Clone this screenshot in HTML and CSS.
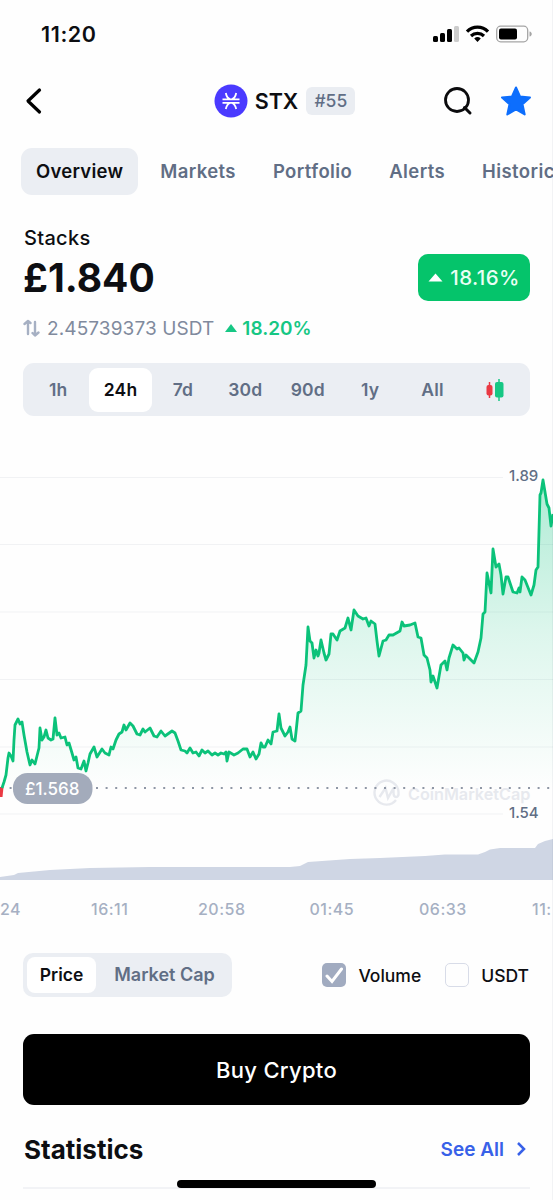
FILE: index.html
```html
<!DOCTYPE html>
<html lang="en">
<head>
    <meta charset="UTF-8">
    <meta name="viewport" content="width=device-width, initial-scale=1.0">
    <title>STX - Stacks</title>
    <link rel="stylesheet" href="styles.css">
</head>
<body>
    <div class="screen">
        <div class="status-bar">
            <span class="time">11:20</span>
            <svg class="status-icons" width="100" height="20" viewBox="0 0 100 20">
                <rect x="0" y="12" width="5" height="6" rx="1.5"/>
                <rect x="7" y="9" width="5" height="9" rx="1.5"/>
                <rect x="14" y="5" width="5" height="13" rx="1.5"/>
                <rect x="21" y="2" width="5" height="16" rx="1.5" fill="#ccc"/>
                <g fill="none" stroke="#000" stroke-width="3.2">
                    <path d="M34 7.6a14.5 14.5 0 0 1 21 0"/>
                    <path d="M38 12a9.5 9.5 0 0 1 13 0"/>
                </g>
                <path d="M41.2 14.5a5 5 0 0 1 6.6 0L44.5 18z"/>
                <rect x="63.7" y="2.2" width="31" height="15.6" rx="4" fill="none" stroke="#a5a5a5" stroke-width="1.3"/>
                <rect x="66" y="4.5" width="18" height="11" rx="2"/>
                <path d="M96.5 7.5c3 .5 3 4.5 0 5z" fill="#a5a5a5"/>
            </svg>
        </div>

        <div class="header">
            <svg class="back" width="18" height="28" viewBox="0 0 18 28"><path d="M15.500 3L4 14L15.500 25"/></svg>
            <div class="coin">
                <svg width="34" height="34" viewBox="0 0 34 34">
                    <circle cx="17" cy="17" r="16.5" fill="#4a3aff"/>
                    <path d="M8.500 15.400h17M8.500 18.800h17M11.800 9q1 5 4.200 6.200M22.200 9q-1 5-4.200 6.200M11.800 25q1-5 4.200-6.200M22.200 25q-1-5-4.200-6.200" fill="none" stroke="#fff" stroke-width="1.800"/>
                </svg>
                <span class="symbol">STX</span>
                <span class="rank">#55</span>
            </div>
            <div class="actions">
                <svg width="30" height="30" viewBox="0 0 30 30">
                    <circle cx="14" cy="14" r="11.5" fill="none" stroke="#0b0b0d" stroke-width="2.8"/>
                    <path d="M21.5 21.5l5.5 5.5" stroke="#0b0b0d" stroke-width="3" stroke-linecap="round"/>
                </svg>
                <svg width="32" height="32" viewBox="0 0 32 32">
                    <path d="M16 2.5L20 11.5L30 12.5L22.5 19.2L24.7 29.5L16 24.5L7.3 29.5L9.5 19.2L2 12.5L12 11.5Z" fill="#0d6efd" stroke="#0d6efd" stroke-width="2" stroke-linejoin="round"/>
                </svg>
            </div>
        </div>

        <div class="tabs">
            <span class="tab active">Overview</span>
            <span class="tab">Markets</span>
            <span class="tab">Portfolio</span>
            <span class="tab">Alerts</span>
            <span class="tab">Historical</span>
        </div>

        <div class="summary">
            <div>
                <div class="name">Stacks</div>
                <div class="price">£1.840</div>
            </div>
            <div class="change">
                <svg width="15" height="9" viewBox="0 0 15 9"><path d="M7.5 0.5L14.5 8.5H.5z" fill="#fff"/></svg>
                <span>18.16%</span>
            </div>
        </div>
        <div class="pair">
            <svg class="swap" width="17" height="20" viewBox="0 0 17 20"><path d="M5 16V3.500M1.500 6L5 3L7.500 5M12 4v13M9.500 15l2.500 2.500l3.500-3"/></svg>
            <span class="rate">2.45739373 USDT</span>
            <svg class="up" width="12" height="8" viewBox="0 0 12 8"><path d="M6 0l6 8H0z" fill="#16c784"/></svg>
            <span class="rate-change">18.20%</span>
        </div>

        <div class="ranges">
            <span>1h</span>
            <span class="active">24h</span>
            <span>7d</span>
            <span>30d</span>
            <span>90d</span>
            <span>1y</span>
            <span>All</span>
            <span class="candles">
                <svg width="20" height="22" viewBox="0 0 20 22">
                    <path d="M4.5 3v16" stroke="#ea3943" stroke-width="1.5"/>
                    <rect x="1.5" y="6" width="6" height="10.5" rx="2" fill="#ea3943"/>
                    <path d="M14 0v22" stroke="#16c784" stroke-width="1.5"/>
                    <rect x="10" y="3" width="8.5" height="15.5" rx="2" fill="#16c784"/>
                </svg>
            </span>
        </div>

        <svg class="chart" width="553" height="510" viewBox="0 416 553 510">
            <defs>
                <linearGradient id="fill" gradientUnits="userSpaceOnUse" x1="0" y1="480" x2="0" y2="790">
                    <stop offset="0" stop-color="#16c784" stop-opacity=".34"/>
                    <stop offset="0.5" stop-color="#16c784" stop-opacity=".14"/>
                    <stop offset="1" stop-color="#16c784" stop-opacity="0"/>
                </linearGradient>
            </defs>
            <path class="grid" d="M0 477.5H503M0 544.5H553M0 612H553M0 679.5H553M0 747H553M0 814H503"/>
            <path id="area" fill="url(#fill)"/>
            <path class="volume" d="M0 880V877L14 875L18 873L50 870L90 868L150 867H290L300 866L308 862L350 859L380 858L425 856L445 854.5H478L485 852L490 849.5L500 848H535L538 844L545 841L553 839V880Z"/>
            <g class="watermark">
                <path d="M396 800A12 12 0 1 1 398.500 792Q399 797 396 797Q393.500 797 393.500 792V788L388 798L385.500 788L379.500 797" fill="none" stroke-width="2.400"/>
                <text x="408" y="800">CoinMarketCap</text>
            </g>
            <path class="open-line" d="M0 788H553"/>
            <path d="M0 787H3.5L2.5 797H0Z" fill="#ea3943"/>
            <path id="line" class="line"/>
            <rect x="13" y="773" width="79.5" height="31" rx="14.5" fill="#a3abbb"/>
            <text class="open-price" x="25" y="795">£1.568</text>
            <text class="y-label" x="509" y="481">1.89</text>
            <text class="y-label" x="509" y="818">1.54</text>
            <g class="x-labels">
                <text x="0" y="915">24</text>
                <text x="91" y="915">16:11</text>
                <text x="198" y="915">20:58</text>
                <text x="309.5" y="915">01:45</text>
                <text x="419" y="915">06:33</text>
                <text x="532" y="915">11:</text>
            </g>
        </svg>

        <div class="options">
            <div class="toggle">
                <span class="active">Price</span>
                <span>Market Cap</span>
            </div>
            <div class="checks">
                <span class="box checked">
                    <svg width="19" height="18" viewBox="0 0 19 18"><path d="M2 10l5 5.5L16.5 3"/></svg>
                </span>
                <span class="label">Volume</span>
                <span class="box"></span>
                <span class="label">USDT</span>
            </div>
        </div>

        <button class="buy">Buy Crypto</button>

        <div class="stats">
            <h2>Statistics</h2>
            <a class="see-all">See All
                <svg width="12" height="16" viewBox="0 0 12 16"><path d="M3 2l6 6l-6 6"/></svg>
            </a>
        </div>
        <div class="home-bar"></div>
    </div>

    <script>
        const points = [
            [2,788],[4,782],[6,775],[8,758],[9,753],[11,756],[13,761],[14,740],[15,725],[18,719],[20,724],[22,722],[24,735],[27,752],[30,765],
            [32,760],[35,764],[37,756],[39,748],[40,728],[42,740],[44,737],[46,730],[48,738],[51,740],[53,739],[55,718],[57,735],[59,733],
            [61,738],[65,737],[67,745],[69,743],[72,753],[74,760],[76,757],[78,768],[81,769],[84,761],[86,771],[88,763],[90,754],[94,747],
            [97,757],[102,749],[105,753],[109,755],[111,747],[113,749],[116,740],[119,734],[122,732],[124,725],[126,730],[130,723],[133,726],
            [137,734],[140,735],[143,729],[145,732],[150,728],[154,736],[157,737],[161,731],[165,736],[172,731],[175,733],[178,741],[181,750],
            [185,751],[187,753],[190,748],[193,753],[196,752],[199,756],[202,750],[205,753],[208,751],[212,755],[215,753],[218,755],[221,753],
            [224,754],[226,752],[227,761],[229,752],[234,755],[238,753],[243,749],[247,749],[250,757],[253,752],[256,759],[259,754],[261,743],
            [263,747],[265,747],[268,740],[271,744],[273,732],[277,731],[279,714],[281,728],[285,736],[288,732],[290,727],[292,739],[295,741],
            [296,732],[298,713],[301,711],[303,685],[306,665],[308,627],[310,641],[312,643],[314,658],[316,650],[318,656],[319,653],[321,640],
            [324,653],[326,660],[329,654],[331,634],[333,634],[337,640],[340,631],[345,628],[348,618],[351,630],[354,610],[358,616],[363,619],
            [366,618],[369,626],[371,621],[375,624],[377,641],[379,656],[383,641],[386,640],[389,635],[393,635],[400,631],[402,622],[404,626],
            [410,625],[415,623],[418,637],[421,638],[424,655],[427,658],[430,670],[431,682],[433,676],[437,688],[441,665],[445,661],[447,670],
            [449,658],[453,645],[457,649],[459,648],[463,653],[464,660],[466,655],[474,663],[478,652],[481,638],[483,614],[485,612],[487,573],
            [491,593],[493,549],[496,567],[499,564],[501,575],[503,594],[506,577],[508,577],[513,592],[517,593],[519,588],[520,592],[522,577],
            [525,580],[531,595],[534,585],[536,570],[538,567],[540,495],[541,493],[543,480],[547,504],[549,508],[551,526],[553,514]
        ];
        const d = 'M' + points.map(p => p.join(' ')).join('L');
        document.getElementById('line').setAttribute('d', d);
        document.getElementById('area').setAttribute('d', d + 'V790H2Z');
    </script>
</body>
</html>
```
FILE: styles.css
```css
* {
    box-sizing: border-box;
}
body {
    margin: 0;
    font-family: Inter, sans-serif;
    background: #fefefe;
    color: #0d0e12;
}
.screen {
    position: relative;
    width: 553px;
    height: 1200px;
    overflow: hidden;
}
.screen::after {
    content: "";
    position: absolute;
    top: 0;
    right: 0;
    width: 1px;
    height: 100%;
    background: rgba(20, 30, 70, 0.05);
}
.status-bar {
    display: flex;
    justify-content: space-between;
    align-items: center;
    height: 68px;
    padding: 0 20px 0 41px;
}
.time {
    font-size: 21.5px;
    font-weight: 600;
    letter-spacing: 0.6px;
}
.header {
    display: flex;
    align-items: center;
    justify-content: space-between;
    height: 66px;
    padding: 0 21px 0 24px;
}
.back path {
    fill: none;
    stroke: #000;
    stroke-width: 3.2;
    stroke-linecap: round;
    stroke-linejoin: round;
}
.coin {
    display: flex;
    align-items: center;
    margin-left: 84px;
}
.symbol {
    margin: 0 8px 0 7px;
    font-size: 21.5px;
    font-weight: 600;
}
.rank {
    width: 49px;
    height: 28px;
    border-radius: 6px;
    background: #eaedf2;
    color: #616e85;
    font-size: 17.5px;
    font-weight: 500;
    line-height: 28px;
    text-align: center;
}
.actions {
    display: flex;
    align-items: center;
    gap: 27px;
}
.tabs {
    display: flex;
    height: 47px;
    margin: 14px 0 0 21px;
    white-space: nowrap;
}
.tab {
    height: 47px;
    margin-right: 7px;
    padding: 0 15px;
    border-radius: 11px;
    color: #616e85;
    font-size: 18.5px;
    font-weight: 600;
    letter-spacing: 0.4px;
    line-height: 47px;
}
.tab.active {
    background: #ebeef3;
    color: #0d0e12;
    letter-spacing: 0.25px;
}
.summary {
    display: flex;
    justify-content: space-between;
    align-items: flex-end;
    height: 106px;
    padding: 0 23px 0 24px;
}
.name {
    font-size: 20px;
    font-weight: 500;
    letter-spacing: 0.3px;
    line-height: 26px;
}
.price {
    height: 50px;
    margin-left: -1px;
    font-size: 39px;
    font-weight: 700;
    line-height: 54px;
}
.change {
    display: flex;
    align-items: center;
    justify-content: center;
    gap: 7px;
    width: 112px;
    height: 47px;
    border-radius: 10px;
    background: #05c46b;
    color: #e9fff4;
    font-size: 20.5px;
    font-weight: 500;
    letter-spacing: 0.4px;
}
.pair {
    display: flex;
    align-items: center;
    height: 54px;
    padding-left: 23px;
}
.swap path {
    fill: none;
    stroke: #a6b0c3;
    stroke-width: 2.4;
    stroke-linecap: round;
    stroke-linejoin: round;
}
.rate {
    margin: 0 11px 0 7px;
    color: #808a9d;
    font-size: 19px;
    letter-spacing: 0.1px;
}
.rate-change {
    margin-left: 5px;
    color: #16c784;
    font-size: 19px;
    font-weight: 600;
}
.ranges {
    display: flex;
    align-items: center;
    width: 507px;
    height: 53px;
    margin: 8px 0 0 23px;
    padding: 0 3px 0 4px;
    border-radius: 11px;
    background: #ebeef3;
}
.ranges span {
    width: 62.4px;
    height: 44px;
    border-radius: 9px;
    color: #616e85;
    font-size: 17.5px;
    font-weight: 600;
    letter-spacing: 0.2px;
    line-height: 44px;
    text-align: center;
}
.ranges .active {
    background: #fff;
    color: #0d0e12;
}
.ranges .candles {
    display: flex;
    align-items: center;
    justify-content: center;
}
.chart {
    display: block;
}
.grid {
    fill: none;
    stroke: #f1f2f4;
}
.volume {
    fill: #cfd6e4;
}
.watermark path {
    stroke: #e7e9ee;
}
.watermark text {
    fill: #e7e9ee;
    font-size: 16.2px;
    font-weight: 600;
}
.open-line {
    stroke: #8f97a5;
    stroke-width: 1.8;
    stroke-dasharray: 2 7.6;
}
.line {
    fill: none;
    stroke: #0bc27a;
    stroke-width: 2.8;
    stroke-linejoin: round;
}
.open-price {
    fill: #fff;
    font-size: 17px;
    font-weight: 500;
}
.y-label {
    fill: #616e85;
    font-size: 15px;
    font-weight: 500;
}
.x-labels text {
    fill: #a6b0c3;
    font-size: 16px;
    font-weight: 500;
    letter-spacing: 0.5px;
}
.options {
    display: flex;
    justify-content: space-between;
    align-items: center;
    height: 44px;
    margin-top: 27px;
    padding: 0 24px 0 23px;
}
.toggle {
    display: flex;
    align-items: center;
    width: 209px;
    height: 44px;
    padding: 0 4px;
    border-radius: 10px;
    background: #ebeef3;
}
.toggle span {
    width: 132px;
    padding-left: 5px;
    color: #616e85;
    font-size: 18px;
    font-weight: 600;
    line-height: 36px;
    text-align: center;
    white-space: nowrap;
}
.toggle .active {
    width: 69px;
    padding: 0;
    border-radius: 8px;
    background: #fff;
    color: #0d0e12;
    font-size: 17.5px;
}
.checks {
    display: flex;
    align-items: center;
}
.box {
    display: flex;
    align-items: center;
    justify-content: center;
    width: 24px;
    height: 24px;
    border: 1.5px solid #d8dce8;
    border-radius: 5px;
}
.box.checked {
    border: none;
    background: #a1abc0;
}
.box path {
    fill: none;
    stroke: #fff;
    stroke-width: 3;
    stroke-linecap: round;
}
.label {
    margin: 0 24px 0 12px;
    font-size: 17.5px;
    font-weight: 500;
}
.label:last-child {
    margin-right: 0;
}
.buy {
    display: block;
    width: 507px;
    height: 71px;
    margin: 37px 0 0 23px;
    border: none;
    border-radius: 11px;
    background: #000;
    color: #fff;
    font-family: inherit;
    font-size: 22px;
    font-weight: 500;
    letter-spacing: 0.3px;
}
.stats {
    display: flex;
    justify-content: space-between;
    align-items: center;
    height: 84px;
    margin: 0 23px;
    border-bottom: 2px solid #f2f3f6;
}
.stats h2 {
    margin: 6px 0 0 1px;
    font-size: 26px;
    font-weight: 700;
}
.see-all {
    display: flex;
    align-items: center;
    gap: 11px;
    margin: 6px 3px 0 0;
    color: #3861e8;
    font-size: 19px;
    font-weight: 600;
}
.see-all path {
    fill: none;
    stroke: #3861e8;
    stroke-width: 2.5;
}
.home-bar {
    position: absolute;
    left: 177px;
    bottom: 12px;
    width: 199px;
    height: 8px;
    border-radius: 4px;
    background: #000;
}
```
